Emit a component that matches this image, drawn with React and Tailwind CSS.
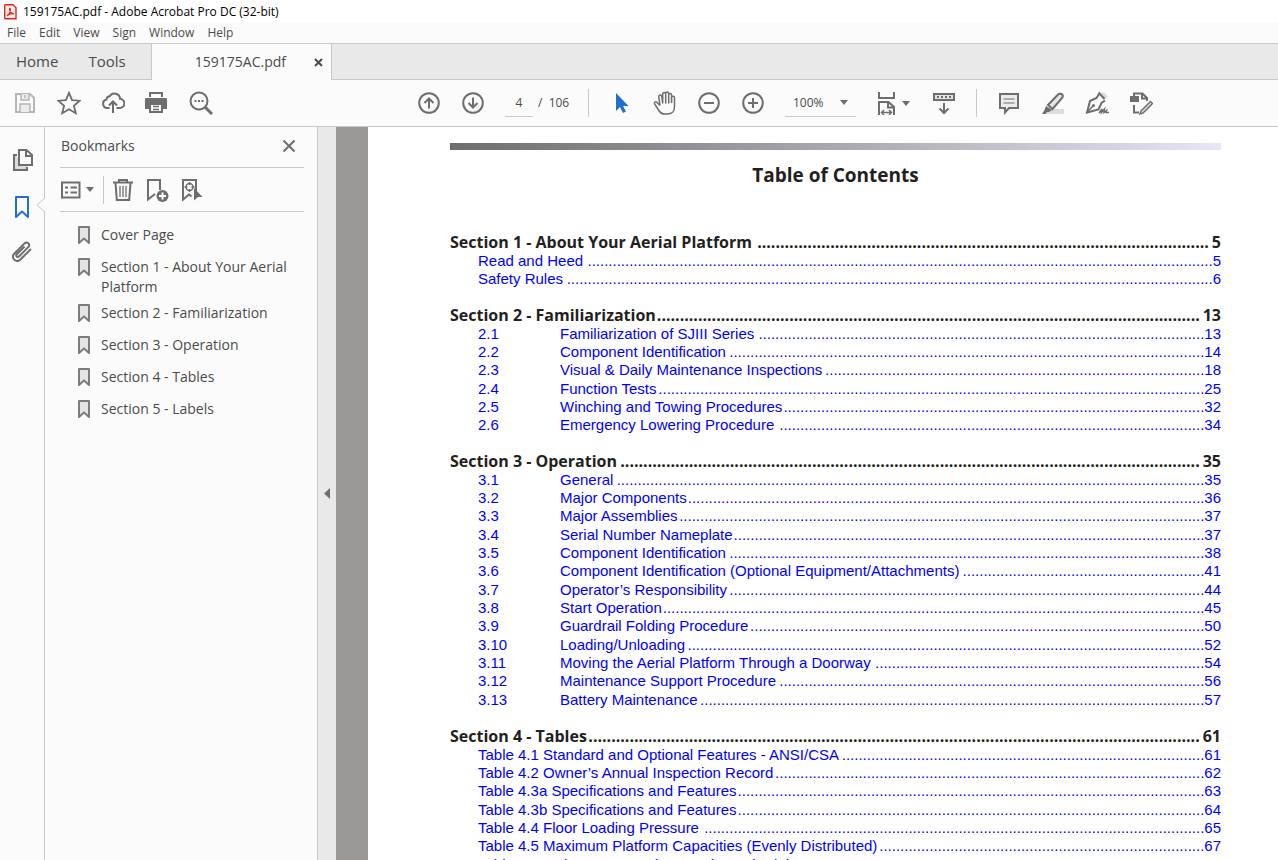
import { useLayoutEffect, useRef, useState } from "react";
import clsx from "clsx";

const menus = ["File", "Edit", "View", "Sign", "Window", "Help"];

const bookmarks = [
  "Cover Page",
  "Section 1 - About Your Aerial Platform",
  "Section 2 - Familiarization",
  "Section 3 - Operation",
  "Section 4 - Tables",
  "Section 5 - Labels",
];

const sections = [
  {
    title: "Section 1 - About Your Aerial Platform",
    page: 5,
    items: [
      { title: "Read and Heed", page: 5 },
      { title: "Safety Rules", page: 6 },
    ],
  },
  {
    title: "Section 2 - Familiarization",
    page: 13,
    items: [
      { num: "2.1", title: "Familiarization of SJIII Series", page: 13 },
      { num: "2.2", title: "Component Identification", page: 14 },
      { num: "2.3", title: "Visual & Daily Maintenance Inspections", page: 18 },
      { num: "2.4", title: "Function Tests", page: 25 },
      { num: "2.5", title: "Winching and Towing Procedures", page: 32 },
      { num: "2.6", title: "Emergency Lowering Procedure", page: 34 },
    ],
  },
  {
    title: "Section 3 - Operation",
    page: 35,
    items: [
      { num: "3.1", title: "General", page: 35 },
      { num: "3.2", title: "Major Components", page: 36 },
      { num: "3.3", title: "Major Assemblies", page: 37 },
      { num: "3.4", title: "Serial Number Nameplate", page: 37 },
      { num: "3.5", title: "Component Identification", page: 38 },
      { num: "3.6", title: "Component Identification (Optional Equipment/Attachments)", page: 41 },
      { num: "3.7", title: "Operator’s Responsibility", page: 44 },
      { num: "3.8", title: "Start Operation", page: 45 },
      { num: "3.9", title: "Guardrail Folding Procedure", page: 50 },
      { num: "3.10", title: "Loading/Unloading", page: 52 },
      { num: "3.11", title: "Moving the Aerial Platform Through a Doorway", page: 54 },
      { num: "3.12", title: "Maintenance Support Procedure", page: 56 },
      { num: "3.13", title: "Battery Maintenance", page: 57 },
    ],
  },
  {
    title: "Section 4 - Tables",
    page: 61,
    items: [
      { title: "Table 4.1 Standard and Optional Features - ANSI/CSA", page: 61 },
      { title: "Table 4.2 Owner’s Annual Inspection Record", page: 62 },
      { title: "Table 4.3a Specifications and Features", page: 63 },
      { title: "Table 4.3b Specifications and Features", page: 64 },
      { title: "Table 4.4 Floor Loading Pressure", page: 65 },
      { title: "Table 4.5 Maximum Platform Capacities (Evenly Distributed)", page: 67 },
      { title: "Table 4.6 Maintenance and Inspection Schedule", page: 68 },
    ],
  },
];

function Icon({ children, size = 24, className }) {
  return (
    <svg
      width={size}
      height={size}
      viewBox={`0 0 ${size} ${size}`}
      fill="none"
      stroke="currentColor"
      strokeWidth="2"
      className={clsx("shrink-0", className)}
      aria-hidden="true"
    >
      {children}
    </svg>
  );
}

function Caret() {
  return (
    <svg width="8" height="5" viewBox="0 0 8 5" className="shrink-0" aria-hidden="true">
      <path d="M0 0h8L4 5z" fill="currentColor" />
    </svg>
  );
}

function ToolButton({ label, children, className }) {
  return (
    <button type="button" aria-label={label} className={clsx("flex items-center justify-center", className)}>
      {children}
    </button>
  );
}

function TitleBar() {
  return (
    <header className="flex h-[23px] items-center gap-1.5 bg-white px-1 text-xs text-black">
      <svg width="13" height="16" viewBox="0 0 13 16" fill="none" stroke="#e2231a" aria-hidden="true">
        <path d="M1.5.8h7.5l3 3v10.9H1.5a.8.8 0 0 1-.8-.8V1.600a.8.8 0 0 1 .8-.8z" fill="#fdecea" strokeWidth="1.400" />
        <path d="M3 11.800c1.800-1 3.400-4 3.300-6.800 0-.8-.9-.8-.8.200.2 2.300 2.300 4.600 4.500 4.800M3.200 11.400c1.600-1.400 4.500-2.200 6.900-1.600" strokeWidth="1.300" />
      </svg>
      <span>159175AC.pdf - Adobe Acrobat Pro DC (32-bit)</span>
    </header>
  );
}

function MenuBar() {
  return (
    <nav className="flex h-5 items-center gap-[13px] px-[7px] text-xs text-[#4b4b4b]">
      {menus.map((menu) => (
        <button key={menu} type="button">
          {menu}
        </button>
      ))}
    </nav>
  );
}

function TabBar() {
  return (
    <div className="flex h-[37px] border-t border-[#c8c8c8] bg-[#e9e9e9] text-[15px] text-[#4b4b4b]">
      <div className="flex w-[151px] gap-[30px] border-b border-[#c8c8c8] pl-4">
        <button type="button">Home</button>
        <button type="button">Tools</button>
      </div>
      <div className="flex w-[181px] items-center justify-end gap-7 border-x border-[#c8c8c8] bg-[#fbfbfb] pr-2 text-sm">
        <button type="button">159175AC.pdf</button>
        <ToolButton label="Close tab">
          <Icon size={9}>
            <path d="M1 1l7 7M8 1L1 8" />
          </Icon>
        </ToolButton>
      </div>
      <div className="flex-1 border-b border-[#c8c8c8]" />
    </div>
  );
}

function Toolbar() {
  return (
    <div className="flex h-[47px] items-center border-b border-[#c8c8c8] text-[#6e6e6e]">
      <div className="flex gap-5 pl-[13px]">
        <ToolButton label="Save" className="text-[#b5b5b5]">
          <Icon>
            <path d="M3 3h14l4 4v14H3z" />
            <path d="M8 3v6h8V3M12 4v3M7 21v-8h10v8" fill="#ececec" strokeWidth="1.500" />
          </Icon>
        </ToolButton>
        <ToolButton label="Star">
          <Icon>
            <path d="M12 1.800l3.100 7.300 7.700.600-5.900 5 1.900 7.500L12 18.200l-6.800 4 1.900-7.500-5.900-5 7.700-.600z" strokeWidth="1.800" />
          </Icon>
        </ToolButton>
        <ToolButton label="Upload">
          <Icon>
            <path d="M8.500 17H6.200a4.300 4.300 0 0 1-.700-8.500 3.500 3.500 0 0 1 3.300-3.200 5.500 5.500 0 0 1 10.200 2.500 4.600 4.600 0 0 1-.500 9.200h-3" />
            <path d="M12 22V11M8 14.500l4-4 4 4" />
          </Icon>
        </ToolButton>
        <ToolButton label="Print">
          <Icon>
            <path d="M4 1h14v5H4zM0 8a1 1 0 0 1 1-1h20a1 1 0 0 1 1 1v10h-4v-5H4v5H0z" fill="currentColor" stroke="none" />
            <path d="M6 3h10v4H6z" fill="#fbfbfb" stroke="none" />
            <path d="M5 13h12v8H5z" fill="#fbfbfb" />
            <path d="M8 15.500h6M8 18.500h6" strokeWidth="1.300" />
          </Icon>
        </ToolButton>
        <ToolButton label="Find">
          <Icon>
            <circle cx="10" cy="10" r="8.500" />
            <path d="M16 16l7 7" strokeWidth="3" />
            <path d="M5.500 10h2M9 10h2M12.500 10h2" />
          </Icon>
        </ToolButton>
      </div>

      <div className="ml-[204px] flex items-center">
        <ToolButton label="Previous page">
          <Icon>
            <circle cx="12" cy="12" r="9.800" />
            <path d="M12 17.500V7.500M7.500 12L12 7.500l4.500 4.500" />
          </Icon>
        </ToolButton>
        <ToolButton label="Next page" className="ml-5">
          <Icon>
            <circle cx="12" cy="12" r="9.800" />
            <path d="M12 6.500v10M7.500 12l4.500 4.500 4.500-4.500" />
          </Icon>
        </ToolButton>
        <input
          aria-label="Page number"
          defaultValue="4"
          className="ml-5 h-7 w-7 border-b border-[#c8c8c8] text-center text-xs text-[#4b4b4b]"
        />
        <span className="ml-[5px] w-[30px] text-xs whitespace-pre text-[#4b4b4b]">/  106</span>
        <div className="mx-5 h-7 w-px bg-[#c8c8c8]" />
        <ToolButton label="Select tool" className="text-[#1f70cf]">
          <Icon>
            <path d="M7 2v18l4-4 3 6 3-1.500-3-5.500h5.500z" fill="currentColor" stroke="none" />
          </Icon>
        </ToolButton>
        <ToolButton label="Hand tool" className="ml-5">
          <Icon>
            <path
              d="M7 14.500L3.800 11.200c-1.300-1.200-3 .200-2.200 1.600l4.200 6.700c1.300 2.200 3.200 3.500 6.300 3.500h2.400c4.500 0 7-3 7-7V6.800c0-2-3-2-3 0V12M7 14.500L5.800 5.800c-.3-2 2.600-2.400 2.900-.4L9.700 12V3c0-2 3-2 3 0v9-9.500c0-2 3-2 3 0V12V4c0-2 2.900-2 2.900 0v8"
              strokeWidth="1.500"
              strokeLinejoin="round"
            />
          </Icon>
        </ToolButton>
        <ToolButton label="Zoom out" className="ml-5">
          <Icon>
            <circle cx="12" cy="12" r="9.800" />
            <path d="M7 12h10" />
          </Icon>
        </ToolButton>
        <ToolButton label="Zoom in" className="ml-5">
          <Icon>
            <circle cx="12" cy="12" r="9.800" />
            <path d="M7 12h10M12 7v10" />
          </Icon>
        </ToolButton>
        <button
          type="button"
          aria-label="Zoom level"
          className="ml-5 flex h-7 w-[71px] items-center justify-between border-b border-[#c8c8c8] px-2 text-xs"
        >
          <span className="text-[#4b4b4b]">100%</span>
          <Caret />
        </button>
        <ToolButton label="Fit page" className="ml-5 gap-0.5">
          <Icon>
            <path d="M3 1v6h15V1" />
            <path d="M3 24V11h9.500l5.500 5v8M12 11v5.500h6" />
            <path d="M6 21.500h9M8 19l-2.500 2.500L8 24M13 19l2.500 2.500L13 24" strokeWidth="1.500" />
          </Icon>
          <Caret />
        </ToolButton>
        <ToolButton label="Page display" className="ml-[22px]">
          <Icon>
            <path d="M2 3h20v6H2z" fill="#e4e4e4" />
            <path d="M5 6h2M9 6h2M13 6h2M17 6h2" />
            <path d="M12 12v10M7.500 17.500L12 22l4.500-4.500" />
          </Icon>
        </ToolButton>
        <div className="mx-5 h-7 w-px bg-[#c8c8c8]" />
        <ToolButton label="Comment">
          <Icon>
            <path d="M3 3h18v14h-9l-4 4.500V17H3z" fill="#ececec" />
            <path d="M6.500 8h11M6.500 12h11" strokeWidth="1.200" />
          </Icon>
        </ToolButton>
        <ToolButton label="Highlight" className="ml-5">
          <Icon>
            <path d="M7 18h16v5H4z" fill="#dcdcdc" stroke="none" />
            <path d="M7 14L17 3.500c1.500-1.500 6-.800 4.500 3L11.500 18z" fill="#e4e4e4" />
            <path d="M5 15l6 4-3 2H6l-1.500 2H1l2.500-4z" fill="currentColor" stroke="none" />
          </Icon>
        </ToolButton>
        <ToolButton label="Fill and sign" className="ml-5">
          <Icon>
            <path d="M15 2l4-.5 4 4-3.500 2.500z" fill="#dcdcdc" stroke="none" />
            <path d="M13.500 1.500l6 6.500M14 3l-2.500 4L5 10 2 21.500l11.500-3L16.500 12l3.500-2.500" />
            <path d="M2 21.500L8 15" strokeWidth="1.500" />
            <circle cx="8.500" cy="14.500" r="1.500" fill="currentColor" stroke="none" />
            <path d="M14 22l3-4-.5 3.500 3-3.500-.5 3.500 2.500-2-.5 2H24" strokeWidth="1.500" />
          </Icon>
        </ToolButton>
        <ToolButton label="Edit PDF" className="ml-5">
          <Icon>
            <path d="M1 5h9v6H1z" fill="currentColor" stroke="none" />
            <path d="M5 5V2.500h8.500L18 7v3M13 2.500v5h5M5 14v7.500h5" />
            <path d="M12 20L21.500 10.500l2 2L14 22l-3 .8z" fill="#e4e4e4" strokeWidth="1.500" />
          </Icon>
        </ToolButton>
      </div>
    </div>
  );
}

function NavRail() {
  return (
    <aside className="relative flex w-[45px] shrink-0 flex-col items-center gap-[22px] border-r border-[#c8c8c8] pt-[21px] text-[#6e6e6e]">
      <ToolButton label="Page thumbnails">
        <Icon>
          <path d="M5 7H4v15h13v-4z" fill="#dcdcdc" stroke="none" />
          <path d="M9 2h7.500l5.500 5v10H9zM16 2v6h6" fill="#fbfbfb" />
          <path d="M7 7H4v15h13v-3" />
        </Icon>
      </ToolButton>
      <ToolButton label="Bookmarks" className="text-[#1f70cf]">
        <Icon>
          <path d="M6 3h12v20l-6-5.500L6 23z" strokeLinejoin="round" />
        </Icon>
      </ToolButton>
      <ToolButton label="Attachments">
        <Icon>
          <path
            d="M14.500 6.500L7 14c-1.800 1.800.4 4 2.200 2.200l9.300-9.300c2.300-2.300-1.500-6-4-3.500l-10.300 10.300c-4 4 2 9.800 6 6L21 9"
            strokeWidth="2"
          />
        </Icon>
      </ToolButton>
      <svg width="9" height="14" viewBox="0 0 9 14" className="absolute top-[71px] -right-px" aria-hidden="true">
        <path d="M9 0L1 7l8 7" fill="#fbfbfb" stroke="#c8c8c8" />
      </svg>
    </aside>
  );
}

function BookmarkPanel() {
  return (
    <aside className="flex w-[273px] shrink-0 flex-col border-r border-[#c8c8c8] pr-[13px] pl-[15px] text-[#6e6e6e]">
      <div className="flex h-[41px] items-center justify-between border-b border-[#c8c8c8] pr-2 pb-0.5 pl-px text-sm">
        <h2 className="text-[#4b4b4b]">Bookmarks</h2>
        <ToolButton label="Close panel">
          <Icon size={14}>
            <path d="M1.500 1.500l11 11M12.500 1.500l-11 11" />
          </Icon>
        </ToolButton>
      </div>
      <div className="flex h-11 items-center border-b border-[#c8c8c8]">
        <ToolButton label="Options" className="gap-[5px]">
          <svg width="21" height="18" viewBox="0 0 21 18" fill="none" stroke="currentColor" strokeWidth="2" aria-hidden="true">
            <path d="M2 1.500h17.500v15H2zM5 6.500h3M10.500 6.500H17M5 11.500h3M10.500 11.500H17" />
          </svg>
          <Caret />
        </ToolButton>
        <div className="mr-[7px] ml-[9px] h-7 w-px bg-[#c8c8c8]" />
        <ToolButton label="Delete bookmark">
          <Icon>
            <path d="M2 4.500h20M8 4V2h8v2M4.500 5l1.300 17h12.400l1.300-17" />
            <path d="M9 8v11M12 8v11M15 8v11" strokeWidth="1.300" />
          </Icon>
        </ToolButton>
        <ToolButton label="New bookmark" className="ml-2.5">
          <Icon>
            <path d="M10 16l-7 5.500V2h12v10" />
            <circle cx="17.500" cy="18" r="6" fill="currentColor" stroke="none" />
            <path d="M14 18h7M17.500 14.500v7" stroke="#fff" />
          </Icon>
        </ToolButton>
        <ToolButton label="Find bookmark" className="ml-2.5">
          <Icon>
            <path d="M17 13V2H4v19.500l6-5 2.500 2" />
            <circle cx="10.500" cy="9" r="3.500" strokeWidth="1.500" />
            <path d="M10.500 4v3M10.500 11v3M5.500 9h3M12.500 9h3" strokeWidth="1.300" />
            <path d="M15 10l8.500 9H19l-4 3.500z" fill="currentColor" stroke="none" />
          </Icon>
        </ToolButton>
      </div>
      <ul className="pt-[13px] pl-[17px] text-sm leading-5 text-[#4b4b4b]">
        {bookmarks.map((title) => (
          <li key={title} className="min-h-8 pb-1.5">
            <button type="button" className="flex gap-2.5 text-left">
              <svg width="14" height="20" viewBox="0 0 14 20" className="shrink-0" aria-hidden="true">
                <path d="M2 2h10v16l-5-4.500L2 18z" fill="#e4e4e4" stroke="#7d7d7d" strokeWidth="2" strokeLinejoin="round" />
              </svg>
              <span>{title}</span>
            </button>
          </li>
        ))}
      </ul>
    </aside>
  );
}

// Fills the free space of a row with as many dots as fit.
function Leader() {
  const ref = useRef(null);
  const [count, setCount] = useState(0);

  useLayoutEffect(() => {
    const el = ref.current;
    const ctx = document.createElement("canvas").getContext("2d");

    const fit = () => {
      const { fontWeight, fontSize, fontFamily } = getComputedStyle(el);
      ctx.font = `${fontWeight} ${fontSize} ${fontFamily}`;
      const dot = ctx.measureText(".".repeat(100)).width / 100;
      setCount(Math.max(0, Math.floor(el.clientWidth / dot)));
    };

    fit();
    const observer = new ResizeObserver(fit);
    observer.observe(el);
    return () => observer.disconnect();
  }, []);

  return (
    <span ref={ref} aria-hidden="true" className="ml-px min-w-0 flex-1 text-right">
      {".".repeat(count)}
    </span>
  );
}

function TocSection({ section }) {
  return (
    <section>
      <h2 className="flex h-[18px] font-['Open_Sans',sans-serif] text-base leading-[18px] font-bold text-[#231f20]">
        <span>{section.title}</span>
        <Leader />
        <span className="ml-[3px]">{section.page}</span>
      </h2>
      <ul className="pl-7">
        {section.items.map((item) => (
          <li key={item.title} className="nth-[3n+1]:pt-px">
            <a href="#toc" className="flex h-[18px] text-[15px] leading-[18px] text-[#0000ff]">
              {item.num && <span className="w-[82px]">{item.num}</span>}
              <span>{item.title}</span>
              <Leader />
              <span>{item.page}</span>
            </a>
          </li>
        ))}
      </ul>
    </section>
  );
}

function Document() {
  return (
    <main className="min-w-0 flex-1 overflow-hidden bg-[#9a9997] pl-8">
      <article className="h-full bg-white pt-4 pr-[57px] pl-[82px] font-['Liberation_Sans',Arial,sans-serif]">
        <div className="h-[7px] bg-linear-to-r from-[#6e6e6e] to-[#e6e6f5]" />
        <h1 className="mt-3 text-center font-['Open_Sans',sans-serif] text-[19px] leading-[26px] font-bold text-[#231f20]">
          Table of Contents
        </h1>
        <div id="toc" className="mt-[45px] flex flex-col gap-[18px] whitespace-nowrap">
          {sections.map((section) => (
            <TocSection key={section.title} section={section} />
          ))}
        </div>
      </article>
    </main>
  );
}

export default function App() {
  return (
    <div className="flex h-screen flex-col overflow-hidden bg-[#fbfbfb] font-['Open_Sans',sans-serif]">
      <TitleBar />
      <MenuBar />
      <TabBar />
      <Toolbar />
      <div className="flex min-h-0 flex-1">
        <NavRail />
        <BookmarkPanel />
        <button
          type="button"
          aria-label="Collapse panel"
          className="flex w-[18px] shrink-0 items-center justify-center bg-[#e9e9e9] text-[#6e6e6e]"
        >
          <svg width="6" height="11" viewBox="0 0 6 11" aria-hidden="true">
            <path d="M6 0v11L0 5.500z" fill="currentColor" />
          </svg>
        </button>
        <Document />
      </div>
    </div>
  );
}
